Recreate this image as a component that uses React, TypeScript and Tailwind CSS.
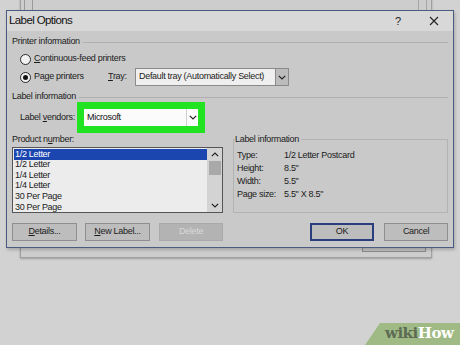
import React from "react";

const Chevron = ({ up = false }: { up?: boolean }) => (
  <svg width="8" height="5" viewBox="0 0 8 5" className="block">
    <path
      d={up ? "M0.8 4.2 L4 1 L7.2 4.2" : "M0.8 0.8 L4 4 L7.2 0.8"}
      fill="none"
      stroke="#222"
      strokeWidth="1.2"
    />
  </svg>
);

const Radio = ({ checked = false }: { checked?: boolean }) => (
  <div className="w-[11px] h-[11px] rounded-full border border-[#2a2a2a] bg-[#f2f2f2] flex items-center justify-center">
    {checked && <div className="w-[5px] h-[5px] rounded-full bg-[#111]" />}
  </div>
);

const items = ["1/2 Letter", "1/2 Letter", "1/4 Letter", "1/4 Letter", "30 Per Page", "30 Per Page"];

export default function App() {
  return (
    <div className="relative w-[460px] h-[345px] overflow-hidden bg-[#d2d2d2] text-[#1b1b1b] font-['Liberation_Sans',Arial,sans-serif] text-[9px] tracking-[-0.3px]">
      {/* background window */}
      <div className="absolute left-[20px] top-[-20px] w-[412px] h-[278px] border border-[#a0a0a0] bg-[#cdcdcd] shadow-[0_1px_2px_rgba(0,0,0,0.25)]" />
      <div className="absolute left-[24px] top-0 w-px h-[12px] bg-[#9a9a9a]" />
      <div className="absolute left-[32px] top-0 w-px h-[12px] bg-[#9a9a9a]" />
      <div className="absolute left-[418px] top-0 w-px h-[12px] bg-[#a5a5a5]" />
      <div className="absolute left-[426px] top-0 w-px h-[12px] bg-[#a5a5a5]" />
      <div className="absolute left-[362px] top-[238px] w-[64px] h-[14px] border border-[#8c8c8c] bg-[#c4c4c4]" />

      {/* dialog */}
      <div className="absolute left-[6px] top-[10px] w-[448px] h-[238px] border border-[#4b5a80] bg-[#c9c9c9] flex flex-col shadow-[1px_2px_3px_rgba(0,0,0,0.2)]">
        <div className="h-[20px] bg-[#d8d8d8] flex items-center pl-[2px] pr-[8px]">
          <span className="text-[11.5px] tracking-[-0.6px] text-[#111]">Label Options</span>
          <div className="ml-auto w-[20px] mr-[15px] flex justify-center text-[11px] text-[#222]">?</div>
          <div className="w-[22px] flex justify-center">
            <svg width="10" height="10" viewBox="0 0 10 10">
              <path d="M1 1 L9 9 M9 1 L1 9" stroke="#222" strokeWidth="1.1" />
            </svg>
          </div>
        </div>

        <div className="flex-1 flex flex-col px-[5px] pt-[5px]">
          {/* Printer information */}
          <div className="h-[12px] flex items-center gap-[3px]">
            <span>Printer information</span>
            <div className="flex-1 h-px bg-[#b0b0b0]" />
          </div>
          <div className="mt-[4px] h-[14px] flex items-center pl-[8px]">
            <Radio />
            <span className="ml-[3px]"><u>C</u>ontinuous-feed printers</span>
          </div>
          <div className="mt-[2px] h-[18px] flex items-center pl-[8px]">
            <Radio checked />
            <span className="ml-[3px] w-[74px]">Pa<u>g</u>e printers</span>
            <span className="w-[27px]"><u>T</u>ray:</span>
            <div className="w-[141px] h-[18px] bg-[#efefef] border border-[#8a8a8a] flex items-center pl-[3px]">
              Default tray (Automatically Select)
            </div>
            <div className="w-[13px] h-[18px] bg-[#bcbcbc] border border-l-0 border-[#8a8a8a] flex items-center justify-center">
              <Chevron />
            </div>
          </div>

          {/* Label information */}
          <div className="mt-[6px] h-[10px] flex items-center gap-[3px]">
            <span>Label information</span>
            <div className="flex-1 h-px bg-[#b0b0b0]" />
          </div>
          <div className="h-[31px] flex items-center">
            <span className="w-[65px] pl-[8px]">Label <u>v</u>endors:</span>
            <div className="w-[128px] h-[31px] bg-[#22e322] p-[7px]">
              <div className="h-[17px] bg-[#fbfbfb] flex items-center">
                <span className="flex-1 pl-[3px] text-[#111]">Microsoft</span>
                <div className="w-[12px] h-full border-l border-[#d0d0d0] flex items-center justify-center">
                  <Chevron />
                </div>
              </div>
            </div>
          </div>

          {/* columns */}
          <div className="h-[80px] flex">
            <div className="w-[211px] flex flex-col">
              <div className="mt-[2px] h-[10px] flex items-center">Product n<u>u</u>mber:</div>
              <div className="mt-[2px] h-[66px] border border-[#555] bg-[#ececec] flex">
                <div className="flex-1 pl-px pt-px overflow-hidden">
                  {items.map((t, i) => (
                    <div
                      key={i}
                      className={
                        "h-[10.6px] flex items-center pl-[1px] " +
                        (i === 0 ? "bg-[#1b46b0] text-white" : "")
                      }
                    >
                      {t}
                    </div>
                  ))}
                </div>
                <div className="w-[15px] bg-[#d3d3d3] flex flex-col items-center">
                  <div className="h-[13px] flex items-center justify-center"><Chevron up /></div>
                  <div className="w-[12px] h-[14px] bg-[#a9a9a9]" />
                  <div className="flex-1" />
                  <div className="h-[13px] flex items-center justify-center"><Chevron /></div>
                </div>
              </div>
            </div>
            <div className="ml-[10px] flex-1">
              <div className="relative mt-[6px] h-[74px] border border-[#b3b3b3] pt-[9px] pl-[3px]">
                <span className="absolute left-[1px] top-[-6px] h-[11px] flex items-center bg-[#c9c9c9] pr-[2px]">
                  Label information
                </span>
                {[
                  ["Type:", "1/2 Letter Postcard"],
                  ["Height:", "8.5\""],
                  ["Width:", "5.5\""],
                  ["Page size:", "5.5\" X 8.5\""],
                ].map(([a, b]) => (
                  <div key={a} className="h-[13px] flex items-center">
                    <span className="w-[47px]">{a}</span>
                    <span>{b}</span>
                  </div>
                ))}
              </div>
            </div>
          </div>

          {/* buttons */}
          <div className="mt-[10px] h-[18px] flex">
            <div className="w-[65px] h-[18px] bg-[#bdbdbd] border border-[#8e8e8e] flex items-center justify-center"><span><u>D</u>etails...</span></div>
            <div className="ml-[8px] w-[65px] h-[18px] bg-[#bdbdbd] border border-[#8e8e8e] flex items-center justify-center"><span><u>N</u>ew Label...</span></div>
            <div className="ml-[9px] w-[64px] h-[18px] bg-[#b3b3b3] border border-[#a9a9a9] flex items-center justify-center text-[#d8d8d8]">Delete</div>
            <div className="ml-auto w-[64px] h-[18px] bg-[#bdbdbd] border-2 border-[#2a3d7c] flex items-center justify-center">OK</div>
            <div className="ml-[10px] w-[64px] h-[18px] bg-[#bdbdbd] border border-[#8e8e8e] flex items-center justify-center">Cancel</div>
          </div>
        </div>
      </div>

      {/* wikiHow badge */}
      <div className="absolute right-0 bottom-0 w-[95px] h-[22px] bg-[#9fba84] [clip-path:polygon(15px_0,100%_0,100%_100%,0_100%)]" />
      <div className="absolute left-[385px] bottom-[2px] h-[20px] flex items-center font-['DejaVu_Serif',serif] font-bold text-[15px] tracking-[-0.5px]">
        <span className="text-[#5d6b55]">wiki</span>
        <span className="text-white">How</span>
      </div>
    </div>
  );
}
